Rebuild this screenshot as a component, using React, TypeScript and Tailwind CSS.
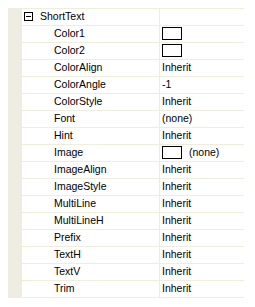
const ROWS: { name: string; value?: string; swatch?: boolean }[] = [
  { name: 'Color1', swatch: true },
  { name: 'Color2', swatch: true },
  { name: 'ColorAlign', value: 'Inherit' },
  { name: 'ColorAngle', value: '-1' },
  { name: 'ColorStyle', value: 'Inherit' },
  { name: 'Font', value: '(none)' },
  { name: 'Hint', value: 'Inherit' },
  { name: 'Image', value: '(none)', swatch: true },
  { name: 'ImageAlign', value: 'Inherit' },
  { name: 'ImageStyle', value: 'Inherit' },
  { name: 'MultiLine', value: 'Inherit' },
  { name: 'MultiLineH', value: 'Inherit' },
  { name: 'Prefix', value: 'Inherit' },
  { name: 'TextH', value: 'Inherit' },
  { name: 'TextV', value: 'Inherit' },
  { name: 'Trim', value: 'Inherit' },
]

export default function App() {
  return (
    <div
      className="w-[255px] h-[307px] bg-white pt-[8px] pl-[8px] text-[10.5px] text-black"
      style={{ fontFamily: '"Liberation Sans", Arial, sans-serif' }}
    >
      <div className="flex w-[236px]">
        {/* gutter */}
        <div className="w-[14px] bg-[#efede2] shrink-0" />

        <div className="flex-1 flex flex-col border-t border-[#efeedd]">
          {/* category */}
          <div className="flex h-[17px] border-b border-[#efeedd]">
            <div className="w-[138px] flex items-center pl-[2px] pb-[1px] border-r border-[#efeedd]">
              <span className="w-[9px] h-[9px] border border-black flex items-center justify-center mr-[7px]">
                <span className="w-[5px] h-px bg-black" />
              </span>
              ShortText
            </div>
            <div className="flex-1" />
          </div>

          {ROWS.map((r) => (
            <div key={r.name} className="flex h-[17px] border-b border-[#efeedd]">
              <div className="w-[138px] flex items-center pl-[32px] pb-[1px] border-r border-[#efeedd]">
                {r.name}
              </div>
              <div className="flex-1 flex items-center pl-[2px] pb-[1px]">
                {r.swatch && (
                  <span className="w-[20px] h-[13px] border border-black bg-white mr-[7px]" />
                )}
                {r.value}
              </div>
            </div>
          ))}
        </div>
      </div>
    </div>
  )
}
